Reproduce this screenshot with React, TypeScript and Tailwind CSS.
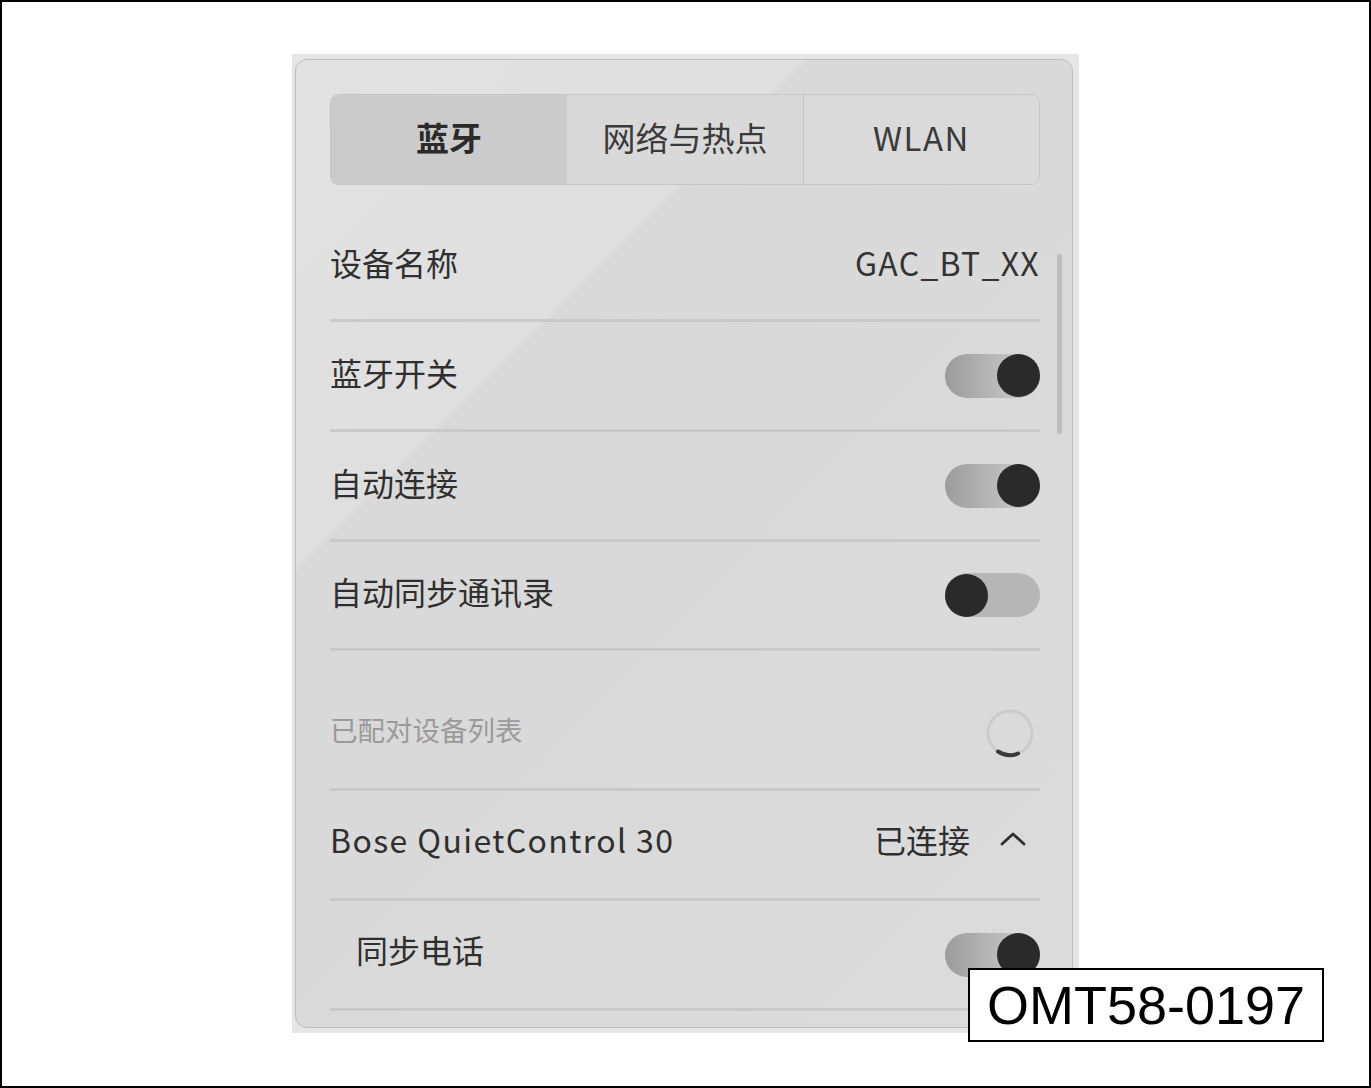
import React from 'react';

const font = { fontFamily: '"Noto Sans CJK SC", "Noto Sans", sans-serif' };

const Toggle: React.FC<{ on: boolean }> = ({ on }) => (
  <div
    className={`w-[95px] h-[44px] rounded-full flex items-center ${
      on
        ? 'justify-end bg-[linear-gradient(90deg,#9c9c9c,#c2c2c2_70%,#b0b0b0)]'
        : 'justify-start bg-[#b6b6b6]'
    }`}
  >
    <div className="w-[43px] h-[43px] rounded-full bg-[#2a2a2a]" />
  </div>
);

const Spinner: React.FC = () => (
  <svg width="52" height="52" viewBox="0 0 52 52" className="mr-[4px]">
    <circle cx="26" cy="26" r="22" fill="none" stroke="#cbcbcb" strokeWidth="3" />
    <path d="M34 46.5 A22 22 0 0 1 14 44.5" fill="none" stroke="#3a3a3a" strokeWidth="4" strokeLinecap="round" />
  </svg>
);

const Row: React.FC<{ children: React.ReactNode; className?: string }> = ({ children, className }) => (
  <div className={`flex items-center justify-between border-b-[3px] border-[#c9c9c9] ${className ?? 'h-[110px]'}`}>
    {children}
  </div>
);

const App: React.FC = () => {
  return (
    <div className="w-[1371px] h-[1088px] bg-white border-2 border-black relative" style={font}>
      <div className="absolute left-[290px] top-[52px] w-[787px] h-[979px] bg-[#e6e6e6]">
        <div className="relative ml-[3px] mt-[5px] w-[778px] h-[969px] rounded-[12px] border border-[#bcbcbc] bg-[linear-gradient(135deg,#e2e2e2_0%,#dfdfdf_29%,#d9d9d9_29.5%,#dbdbdb_100%)] overflow-hidden pl-[34px] pr-[32px] pt-[34px]">
          {/* tabs */}
          <div className="flex h-[91px] rounded-[8px] border border-[#c6c6c6] overflow-hidden text-[33px] text-[#3a3a3a]">
            <div className="w-[236px] flex items-center justify-center bg-[#cbcbcb] font-bold text-[#2a2a2a] -mt-[4px]">蓝牙</div>
            <div className="w-[237px] flex items-center justify-center bg-[#d9d9d9] border-r border-[#c4c4c4] -mt-[4px]">网络与热点</div>
            <div className="flex-1 flex items-center justify-center bg-[#dadada] tracking-[1.5px] -mt-[4px]">WLAN</div>
          </div>

          <div className="mt-[27px] text-[32px] text-[#2f2f2f]">
            <Row>
              <span className="-mt-[8px]">设备名称</span>
              <span className="-mt-[8px] text-[#333] tracking-[1.3px]">GAC_BT_XX</span>
            </Row>
            <Row>
              <span className="-mt-[8px]">蓝牙开关</span>
              <Toggle on />
            </Row>
            <Row>
              <span className="-mt-[8px]">自动连接</span>
              <Toggle on />
            </Row>
            <Row className="h-[109px]">
              <span className="-mt-[8px]">自动同步通讯录</span>
              <Toggle on={false} />
            </Row>
            <Row className="h-[140px] pt-[26px]">
              <span className="-mt-[6px] text-[27.5px] text-[#9a9a9a]">已配对设备列表</span>
              <Spinner />
            </Row>
            <Row>
              <span className="-mt-[12px] tracking-[1.4px]">Bose QuietControl 30</span>
              <div className="flex items-center gap-[30px] mr-[14px] -mt-[12px]">
                <span>已连接</span>
                <svg width="26" height="16" viewBox="0 0 26 16">
                  <polyline points="2,13 13,3 24,13" fill="none" stroke="#2f2f2f" strokeWidth="2.8" strokeLinecap="round" strokeLinejoin="round" />
                </svg>
              </div>
            </Row>
            <Row>
              <span className="ml-[26px] -mt-[12px]">同步电话</span>
              <Toggle on />
            </Row>
          </div>

          {/* scrollbar */}
          <div className="absolute left-[761px] top-[194px] w-[5px] h-[180px] rounded-full bg-[#bdbdbd]" />
        </div>
      </div>

      <div className="absolute left-[966px] top-[966px] w-[356px] h-[74px] bg-white border-2 border-black flex items-center justify-center text-[54px] leading-none text-black" style={{ fontFamily: '"Liberation Sans", Arial, sans-serif' }}>
        OMT58-0197
      </div>
    </div>
  );
};

export default App;
